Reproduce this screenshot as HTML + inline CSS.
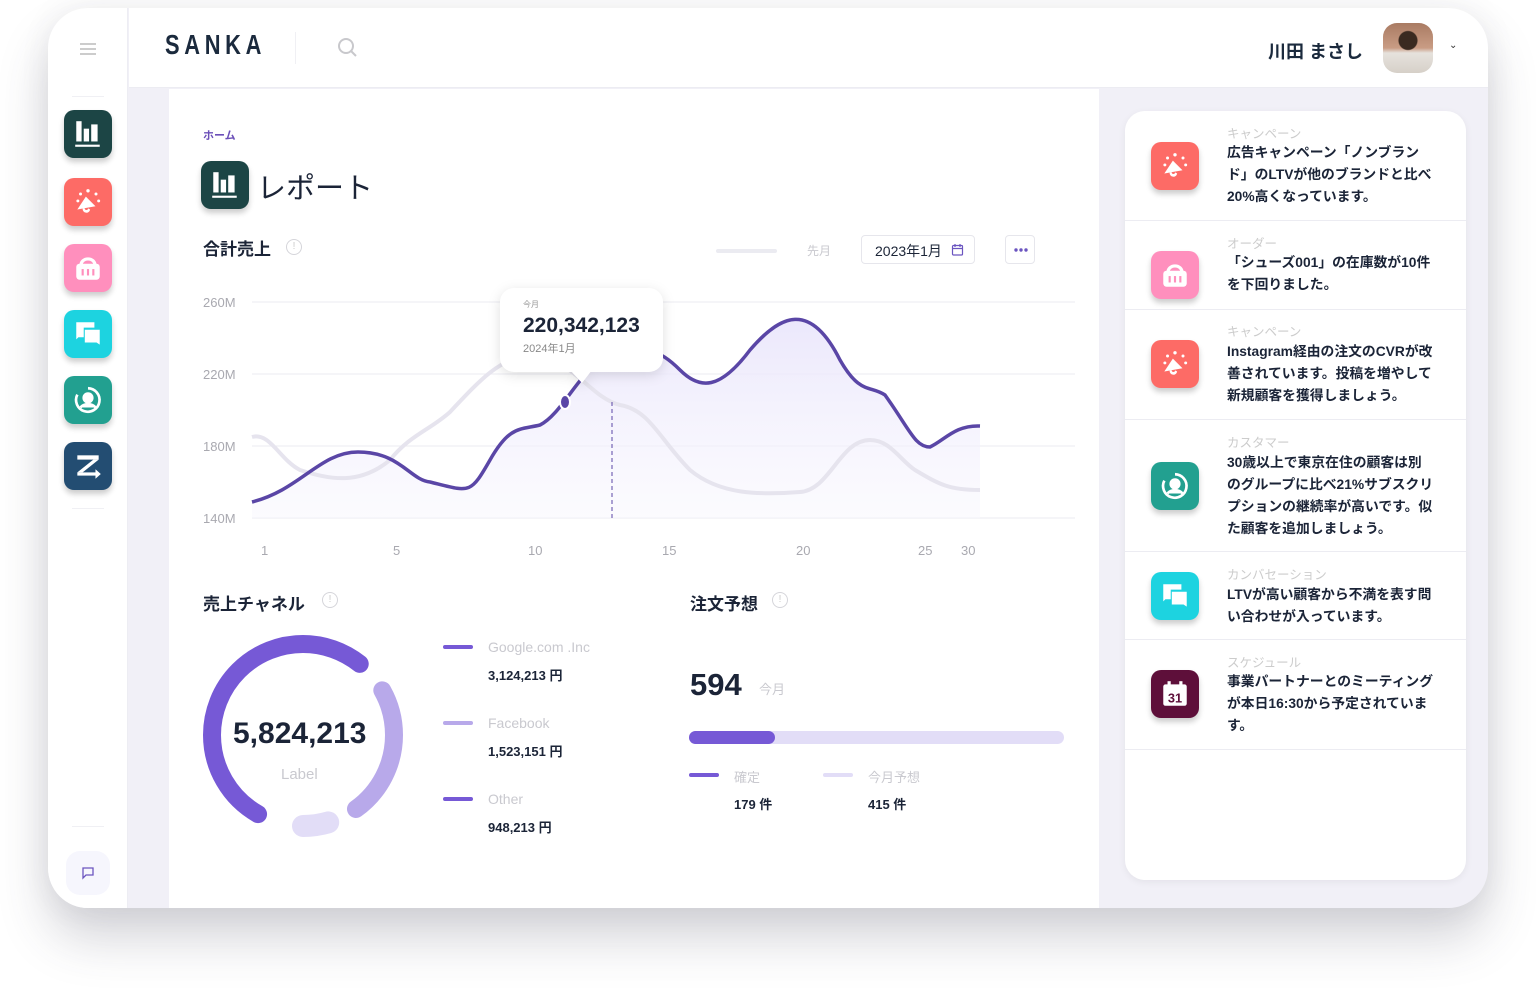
<!DOCTYPE html>
<html><head><meta charset="utf-8"><style>
*{margin:0;padding:0;box-sizing:border-box}
body{width:1536px;height:996px;background:#fff;font-family:"Liberation Sans","Noto Sans CJK JP",sans-serif;color:#1b2437;position:relative;overflow:hidden}
.frame{position:absolute;left:48px;top:8px;width:1440px;height:900px;border-radius:40px;background:#f1f0f7;box-shadow:0 30px 50px rgba(60,60,80,.22),0 0 30px rgba(60,60,80,.08);overflow:hidden}
.side{position:absolute;left:0;top:0;width:80px;height:900px;background:#fff;border-right:1px solid #ededf3}
.head{position:absolute;left:81px;top:0;right:0;height:80px;background:#fff;border-bottom:1px solid #ececf2}
.ic{position:absolute;left:16px;width:48px;height:48px;border-radius:10px;box-shadow:0 4px 6px rgba(0,0,0,.2);display:flex;align-items:center;justify-content:center}
.main{position:absolute;left:121px;top:81px;width:930px;height:819px;background:#fff}
.abs{position:absolute;white-space:nowrap}
.rp{position:absolute;width:341px;height:769px;background:#fff;border-radius:20px;box-shadow:0 2px 8px rgba(0,0,0,.06)}
.item{position:absolute;left:0;width:341px;border-bottom:1px solid #ececf2}
.item .i{position:absolute;left:26px;width:48px;height:48px;border-radius:10px;box-shadow:0 4px 6px rgba(0,0,0,.2);display:flex;align-items:center;justify-content:center}
.item .c{position:absolute;left:102px;font-size:12.5px;color:#ccc}
.item .t{position:absolute;left:102px;font-size:13.8px;font-weight:bold;line-height:22px;color:#1b2437;width:208px}
.lg{width:30px;height:4px;border-radius:2px;position:absolute}
.gray{color:#c9c9cf}
</style></head><body>
<svg width="0" height="0" style="position:absolute"><defs>
<symbol id="mega" viewBox="0 0 30 30"><g fill="#fff"><path d="M5 22 L13 10 L22 19 Z"/><path d="M10 21 a3.5 3.5 0 0 0 7 1 l-2 -1 a1.5 1.5 0 0 1 -3 0z"/><circle cx="15" cy="4.5" r="1.6"/><circle cx="8" cy="7.5" r="1.4"/><circle cx="22.5" cy="7.5" r="1.4"/><circle cx="25" cy="14" r="1.4"/><circle cx="5.5" cy="14" r="1.4"/></g></symbol>
</defs></svg>
<div class="frame">
 <div class="side">
  <div class="abs" style="left:32px;top:35px;width:16px;height:2px;background:#ccc;box-shadow:0 5px 0 #ccc,0 10px 0 #ccc"></div>
  <div class="abs" style="left:24px;top:88px;width:32px;height:1px;background:#f0f0f4"></div>
  <div class="ic" style="top:102px;background:#1c4545"><svg width="32" height="32" viewBox="0 0 30 30" fill="#fff"><rect x="4" y="3" width="5" height="19"/><rect x="11" y="10" width="5" height="12"/><rect x="18" y="6" width="6" height="16"/><rect x="3" y="25" width="23" height="2"/></svg></div>
  <div class="ic" style="top:170px;background:#fd6b66"><svg width="32" height="32"><use href="#mega"/></svg></div>
  <div class="ic" style="top:236px;background:#ff8fbd"><svg width="32" height="32" viewBox="0 0 30 30" fill="#fff"><path d="M7 12 a8 7 0 0 1 16 0 h-3 a5 4 0 0 0 -10 0z"/><rect x="4" y="11" width="22" height="15" rx="3"/><rect x="9" y="16" width="2" height="6" fill="#ff8fbd"/><rect x="14" y="16" width="2" height="6" fill="#ff8fbd"/><rect x="19" y="16" width="2" height="6" fill="#ff8fbd"/></svg></div>
  <div class="ic" style="top:302px;background:#1dd3e0"><svg width="32" height="32" viewBox="0 0 30 30" fill="#fff"><path d="M4 4 h17 v5 h-10 v9 h-5 l-2 2z"/><path d="M12 11 h14 v14 l-3 -2 h-11z"/></svg></div>
  <div class="ic" style="top:368px;background:#22a090"><svg width="32" height="32" viewBox="0 0 30 30" fill="none" stroke="#fff" stroke-width="2.5"><path d="M15 4 a11 11 0 1 1 -10 6"/><circle cx="15" cy="13" r="4" fill="#fff"/><path d="M8 22 a8 6 0 0 1 14 0" fill="#fff"/></svg></div>
  <div class="ic" style="top:434px;background:#234d72"><svg width="32" height="32" viewBox="0 0 30 30" fill="#fff"><rect x="5" y="5" width="20" height="4"/><path d="M20 9 h5 L10 21 h-5z"/><rect x="5" y="21" width="18" height="3"/><path d="M22 18 l5 4.5 -5 4.5z"/></svg></div>
  <div class="abs" style="left:24px;top:500px;width:32px;height:1px;background:#f0f0f4"></div>
  <div class="abs" style="left:24px;top:818px;width:32px;height:1px;background:#f0f0f4"></div>
  <div class="abs" style="left:18px;top:843px;width:44px;height:44px;border-radius:14px;background:#f6f6fd;display:flex;align-items:center;justify-content:center"><svg width="14" height="14" viewBox="0 0 14 14" fill="none" stroke="#6b55c0" stroke-width="1.3"><path d="M2 2 h10 v7 h-7 l-3 3z"/></svg></div>
 </div>
 <div class="head">
  <div class="abs" style="left:36px;top:21px;font-size:28px;font-weight:bold;letter-spacing:6px;color:#1b2a3d;transform:scaleX(.78);transform-origin:left">SANKA</div>
  <div class="abs" style="left:166px;top:24px;width:1px;height:32px;background:#f0f0f4"></div>
  <svg class="abs" style="left:208px;top:29px" width="22" height="22" viewBox="0 0 22 22" fill="none" stroke="#c8c8cc" stroke-width="2"><circle cx="9" cy="9" r="7"/><path d="M14 14 l5 5"/></svg>
  <div class="abs" style="left:1139px;top:30px;font-size:18px;font-weight:bold;color:#1b2a3d">川田 まさし</div>
  <div class="abs" style="left:1254px;top:15px;width:50px;height:50px;border-radius:14px;background:radial-gradient(circle at 50% 35%,#3a2a20 0 9px,transparent 10px),linear-gradient(180deg,#a97b63 0,#c99c84 50%,#e6e2dd 60%,#d6d0c8 100%)"></div>
  <div class="abs" style="left:1320px;top:32px;font-size:10px;color:#333">⌄</div>
 </div>
 <div class="main">
  <div class="abs" style="left:34px;top:38px;font-size:11px;font-weight:bold;color:#6b4fb8">ホーム</div>
  <div class="abs" style="left:32px;top:72px;width:48px;height:48px;border-radius:10px;background:#1c4545;box-shadow:0 4px 6px rgba(0,0,0,.2);display:flex;align-items:center;justify-content:center"><svg width="32" height="32" viewBox="0 0 30 30" fill="#fff"><rect x="4" y="3" width="5" height="19"/><rect x="11" y="10" width="5" height="12"/><rect x="18" y="6" width="6" height="16"/><rect x="3" y="25" width="23" height="2"/></svg></div>
  <div class="abs" style="left:88px;top:76px;font-size:29px;color:#1b2437">レポート</div>
  <div class="abs" style="left:34px;top:146px;font-size:17px;font-weight:bold">合計売上</div>
  <div class="abs" style="left:117px;top:150px;width:16px;height:16px;border:1.5px solid #d5d5da;border-radius:50%;font-size:10px;color:#ccc;text-align:center;line-height:13px">!</div>
  <div class="abs" style="left:547px;top:160px;width:61px;height:4px;border-radius:2px;background:#ebebf1"></div>
  <div class="abs gray" style="left:638px;top:153px;font-size:12px">先月</div>
  <div class="abs" style="left:692px;top:146px;width:114px;height:29px;border:1px solid #e6e6ec;border-radius:4px;font-size:14px;padding:5px 0 0 13px;color:#1b2437">2023年1月<svg style="position:absolute;right:10px;top:7px" width="13" height="13" viewBox="0 0 13 13" fill="none" stroke="#6b55c0" stroke-width="1.2"><rect x="1.5" y="2.5" width="10" height="9.5" rx="1"/><path d="M1.5 5.5h10M4 1v3M9 1v3"/></svg></div>
  <div class="abs" style="left:836px;top:146px;width:30px;height:29px;border:1px solid #e6e6ec;border-radius:4px"><svg style="position:absolute;left:8px;top:12px" width="14" height="4"><circle cx="2" cy="2" r="1.7" fill="#6b55c0"/><circle cx="7" cy="2" r="1.7" fill="#6b55c0"/><circle cx="12" cy="2" r="1.7" fill="#6b55c0"/></svg></div>
 </div>
 <svg class="abs" style="left:0;top:0" width="1440" height="900" viewBox="48 8 1440 900">
  <defs><linearGradient id="g" x1="0" y1="0" x2="0" y2="1"><stop offset="0" stop-color="#e9e5fb" stop-opacity=".9"/><stop offset="1" stop-color="#f8f7fe" stop-opacity=".5"/></linearGradient></defs>
  <g stroke="#ebebf1" stroke-width="1"><path d="M252 302H1075M252 374H1075M252 446H1075M252 518H1075"/></g>
  <g font-size="13" fill="#a9a9b0" font-family="Liberation Sans,sans-serif"><text x="203" y="307">260M</text><text x="203" y="379">220M</text><text x="203" y="451">180M</text><text x="203" y="523">140M</text>
  <text x="261" y="555">1</text><text x="393" y="555">5</text><text x="528" y="555">10</text><text x="662" y="555">15</text><text x="796" y="555">20</text><text x="918" y="555">25</text><text x="961" y="555">30</text></g>
  <path d="M252 502 C300 490 320 452 358 452 C400 452 410 480 430 482 C470 492 470 495 490 460 C510 425 520 430 540 425 C560 415 575 380 600 360 C640 340 660 350 680 370 C700 390 720 390 750 350 C780 315 810 300 840 360 C860 395 870 385 885 395 C910 430 915 447 930 447 C945 440 955 425 980 426 L980 518 L252 518Z" fill="url(#g)"/>
  <path d="M252 437 C270 432 280 460 300 470 C330 480 360 485 390 460 C410 435 430 430 450 412 C480 380 500 358 530 355 C570 355 590 398 620 405 C650 410 660 440 690 470 C720 495 760 495 800 492 C830 490 840 440 870 440 C890 440 900 460 915 470 C940 485 950 490 980 490" fill="none" stroke="#e6e4ee" stroke-width="4"/>
  <path d="M252 502 C300 490 320 452 358 452 C400 452 410 480 430 482 C470 492 470 495 490 460 C510 425 520 430 540 425 C560 415 575 380 600 360 C640 340 660 350 680 370 C700 390 720 390 750 350 C780 315 810 300 840 360 C860 395 870 385 885 395 C910 430 915 447 930 447 C945 440 955 425 980 426" fill="none" stroke="#5a46a6" stroke-width="3.5"/>
  <path d="M612 402 V518" stroke="#5a46a6" stroke-dasharray="4 3" stroke-width="1"/>
  <ellipse cx="565" cy="402" rx="5" ry="7" fill="#5a46a6" stroke="#fff" stroke-width="2"/>
  <g filter="drop-shadow(0 3px 6px rgba(0,0,0,.12))"><rect x="500" y="288" width="163" height="84" rx="14" fill="#fff"/><path d="M570 370 L582 383 L592 370Z" fill="#fff"/></g>
  <text x="523" y="307" font-size="8" fill="#999" font-family="Noto Sans CJK JP">今月</text>
  <text x="523" y="332" font-size="21" font-weight="bold" fill="#1b2437" font-family="Liberation Sans">220,342,123</text>
  <text x="523" y="352" font-size="11" fill="#888" font-family="Liberation Sans,Noto Sans CJK JP">2024年1月</text>
  <g fill="none" stroke-linecap="round" transform="rotate(90 303 735)">
   <circle cx="303" cy="735" r="91" stroke="#7659d6" stroke-width="18" stroke-dasharray="300 1000" stroke-dashoffset="-47"/>
   <circle cx="303" cy="735" r="91" stroke="#b8a9ea" stroke-width="18" stroke-dasharray="133 1000" stroke-dashoffset="-382"/>
   <circle cx="303" cy="735" r="91" stroke="#e2ddf7" stroke-width="22" stroke-dasharray="37 1000" stroke-dashoffset="-546"/>
  </g>
 </svg>
</div>
<div class="abs" style="left:203px;top:590px;font-size:17px;font-weight:bold">売上チャネル</div>
<div class="abs" style="left:322px;top:592px;width:16px;height:16px;border:1.5px solid #d5d5da;border-radius:50%;font-size:10px;color:#ccc;text-align:center;line-height:13px">!</div>
<div class="abs" style="left:233px;top:717px;font-size:30px;font-weight:bold">5,824,213</div>
<div class="abs gray" style="left:281px;top:766px;font-size:15px">Label</div>
<div class="lg" style="left:443px;top:645px;background:#7659d6"></div>
<div class="abs gray" style="left:488px;top:639px;font-size:14px">Google.com .Inc</div>
<div class="abs" style="left:488px;top:665px;font-size:13px;font-weight:bold">3,124,213 円</div>
<div class="lg" style="left:443px;top:721px;background:#b8a9ea"></div>
<div class="abs gray" style="left:488px;top:715px;font-size:14px">Facebook</div>
<div class="abs" style="left:488px;top:741px;font-size:13px;font-weight:bold">1,523,151 円</div>
<div class="lg" style="left:443px;top:797px;background:#7659d6"></div>
<div class="abs gray" style="left:488px;top:791px;font-size:14px">Other</div>
<div class="abs" style="left:488px;top:817px;font-size:13px;font-weight:bold">948,213 円</div>
<div class="abs" style="left:690px;top:590px;font-size:17px;font-weight:bold">注文予想</div>
<div class="abs" style="left:772px;top:592px;width:16px;height:16px;border:1.5px solid #d5d5da;border-radius:50%;font-size:10px;color:#ccc;text-align:center;line-height:13px">!</div>
<div class="abs" style="left:690px;top:667px;font-size:31px;font-weight:bold">594</div>
<div class="abs gray" style="left:759px;top:679px;font-size:13px">今月</div>
<div class="abs" style="left:689px;top:731px;width:375px;height:13px;border-radius:7px;background:#e2ddf7"><div style="width:86px;height:13px;border-radius:7px;background:#7659d6"></div></div>
<div class="lg" style="left:689px;top:773px;background:#7659d6"></div>
<div class="abs gray" style="left:734px;top:767px;font-size:13px">確定</div>
<div class="abs" style="left:734px;top:794px;font-size:13px;font-weight:bold">179 件</div>
<div class="lg" style="left:823px;top:773px;background:#e2ddf7"></div>
<div class="abs gray" style="left:868px;top:767px;font-size:13px">今月予想</div>
<div class="abs" style="left:868px;top:794px;font-size:13px;font-weight:bold">415 件</div>

<div class="rp" style="left:1125px;top:111px">
 <div class="item" style="top:0;height:110px"><div class="i" style="top:31px;background:#fd6b66"><svg width="32" height="32"><use href="#mega"/></svg></div><div class="c" style="top:12px">キャンペーン</div><div class="t" style="top:31px">広告キャンペーン「ノンブランド」のLTVが他のブランドと比べ20%高くなっています。</div></div>
 <div class="item" style="top:110px;height:89px"><div class="i" style="top:30px;background:#ff8fbd"><svg width="32" height="32" viewBox="0 0 30 30" fill="#fff"><path d="M7 12 a8 7 0 0 1 16 0 h-3 a5 4 0 0 0 -10 0z"/><rect x="4" y="11" width="22" height="15" rx="3"/><rect x="9" y="16" width="2" height="6" fill="#ff8fbd"/><rect x="14" y="16" width="2" height="6" fill="#ff8fbd"/><rect x="19" y="16" width="2" height="6" fill="#ff8fbd"/></svg></div><div class="c" style="top:12px">オーダー</div><div class="t" style="top:31px">「シューズ001」の在庫数が10件を下回りました。</div></div>
 <div class="item" style="top:199px;height:110px"><div class="i" style="top:30px;background:#fd6b66"><svg width="32" height="32"><use href="#mega"/></svg></div><div class="c" style="top:11px">キャンペーン</div><div class="t" style="top:31px">Instagram経由の注文のCVRが改善されています。投稿を増やして新規顧客を獲得しましょう。</div></div>
 <div class="item" style="top:309px;height:132px"><div class="i" style="top:42px;background:#22a090"><svg width="32" height="32" viewBox="0 0 30 30" fill="none" stroke="#fff" stroke-width="2.5"><path d="M15 4 a11 11 0 1 1 -10 6"/><circle cx="15" cy="13" r="4" fill="#fff"/><path d="M8 22 a8 6 0 0 1 14 0" fill="#fff"/></svg></div><div class="c" style="top:12px">カスタマー</div><div class="t" style="top:32px">30歳以上で東京在住の顧客は別のグループに比べ21%サブスクリプションの継続率が高いです。似た顧客を追加しましょう。</div></div>
 <div class="item" style="top:441px;height:88px"><div class="i" style="top:20px;background:#1dd3e0"><svg width="32" height="32" viewBox="0 0 30 30" fill="#fff"><path d="M4 4 h17 v5 h-10 v9 h-5 l-2 2z"/><path d="M12 11 h14 v14 l-3 -2 h-11z"/></svg></div><div class="c" style="top:12px">カンバセーション</div><div class="t" style="top:32px">LTVが高い顧客から不満を表す問い合わせが入っています。</div></div>
 <div class="item" style="top:529px;height:110px"><div class="i" style="top:30px;background:#5e0f3a"><svg width="32" height="32" viewBox="0 0 30 30"><rect x="4" y="6" width="22" height="20" rx="2" fill="#fff"/><rect x="8" y="3" width="3" height="6" fill="#fff"/><rect x="19" y="3" width="3" height="6" fill="#fff"/><text x="15" y="23" font-size="12" font-weight="bold" fill="#5e0f3a" text-anchor="middle" font-family="Liberation Sans">31</text></svg></div><div class="c" style="top:12px">スケジュール</div><div class="t" style="top:31px">事業パートナーとのミーティングが本日16:30から予定されています。</div></div>
</div>
</body></html>
